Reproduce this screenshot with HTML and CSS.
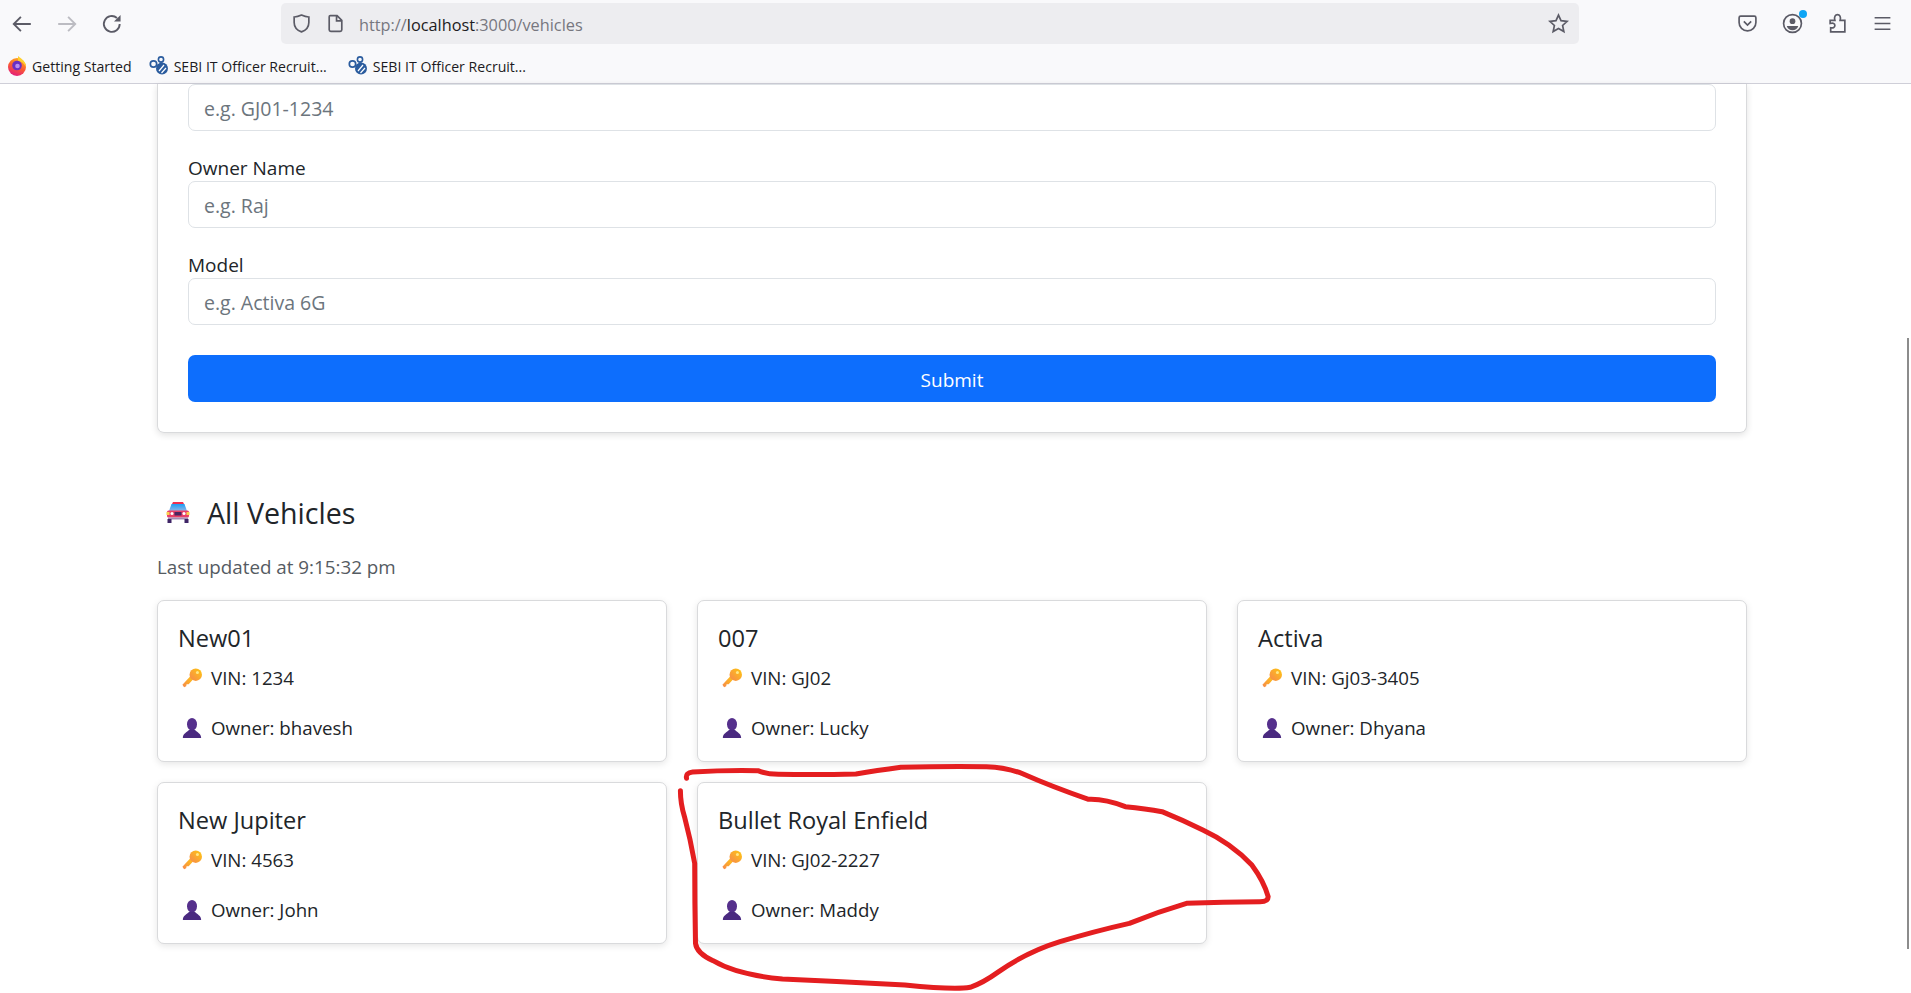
FILE: index.html
```html
<!DOCTYPE html>
<html lang="en">
<head>
    <meta charset="UTF-8">
    <meta name="viewport" content="width=device-width, initial-scale=1.0">
    <link rel="stylesheet" href="styles.css">
    <title>Vehicles</title>
</head>
<body>
    <svg class="defs" width="0" height="0">
        <defs>
            <linearGradient id="keyfill" x1="1" y1="0" x2="0" y2="1">
                <stop offset="0" stop-color="#ffc80f"/>
                <stop offset="1" stop-color="#f6874f"/>
            </linearGradient>
            <linearGradient id="glass" x1="0" y1="0" x2="0" y2="1">
                <stop offset="0" stop-color="#1f9df2"/>
                <stop offset="1" stop-color="#8fb6e8"/>
            </linearGradient>
            <linearGradient id="fox" x1="0.7" y1="0" x2="0.3" y2="1">
                <stop offset="0" stop-color="#ffb01f"/>
                <stop offset="0.5" stop-color="#fb5b32"/>
                <stop offset="1" stop-color="#e2197f"/>
            </linearGradient>
            <symbol id="key" viewBox="0 0 24 24">
                <path d="M10 10 L0.500 20 L2.500 23 L5 22 L5.500 19.500 L8 19.500 L14 13 Z" fill="url(#keyfill)"/>
                <circle cx="16.500" cy="8" r="7.500" fill="url(#keyfill)"/>
                <circle cx="18.500" cy="5.500" r="1.800" fill="#ffe889"/>
            </symbol>
            <symbol id="person" viewBox="0 0 24 24">
                <ellipse cx="12" cy="7.500" rx="6" ry="7.500" fill="#55308c"/>
                <path d="M1 24 C1 18 6 17.500 8.500 14 H15.500 C18 17.500 23 18 23 24 Z" fill="#4a2a80"/>
            </symbol>
            <symbol id="car" viewBox="0 0 24 21">
                <path d="M7 0 H17 L18 2 H6 Z" fill="#f0304f"/>
                <path d="M5.500 2 H18.500 L21 9 H3 Z" fill="url(#glass)"/>
                <rect x="1" y="8.500" width="22" height="7" rx="1.500" fill="#ea3f68"/>
                <rect x="0.500" y="10" width="3" height="3" fill="#f9d04e"/>
                <rect x="20.500" y="10" width="3" height="3" fill="#f9d04e"/>
                <circle cx="6" cy="11.500" r="1.500" fill="#fff"/>
                <circle cx="18" cy="11.500" r="1.500" fill="#fff"/>
                <rect x="8.500" y="10" width="7" height="3.500" fill="#4a2560"/>
                <rect x="2" y="15.500" width="20" height="2" fill="#a58bb4"/>
                <rect x="1.500" y="17" width="4" height="4" fill="#3e2466"/>
                <rect x="18.500" y="17" width="4" height="4" fill="#3e2466"/>
            </symbol>
            <symbol id="sebi" viewBox="0 0 20 20">
                <circle cx="4.500" cy="8" r="3.200" fill="none" stroke="#2b5c9e" stroke-width="1.700"/>
                <circle cx="12" cy="3.500" r="2.600" fill="none" stroke="#2b5c9e" stroke-width="1.600"/>
                <circle cx="13" cy="12.500" r="6" fill="#2b5c9e"/>
                <path d="M10 15 L15 9 M12.500 17 L17 12" stroke="#fff" stroke-width="1.200"/>
            </symbol>
        </defs>
    </svg>

    <header class="browser">
        <div class="nav-row">
            <div class="nav-btns">
                <svg class="ico" viewBox="0 0 20 20"><path d="M18 10 H2.500 M9 3.500 L2.500 10 L9 16.500"/></svg>
                <svg class="ico ico-off" viewBox="0 0 20 20"><path d="M2 10 H17.500 M11 3.500 L17.500 10 L11 16.500"/></svg>
                <svg class="ico" viewBox="0 0 20 20"><path d="M17 10 A7.200 7.200 0 1 1 14.500 4.500"/><path class="solid" d="M17.800 1.800 V7.800 H11.800 Z"/></svg>
            </div>
            <div class="urlbar">
                <svg class="ico-sm" viewBox="0 0 20 20"><path d="M10 2 C7 3.500 5 3.800 3 3.800 V9 C3 13.500 6 16.500 10 18 C14 16.500 17 13.500 17 9 V3.800 C15 3.800 13 3.500 10 2 Z"/></svg>
                <svg class="ico-sm" viewBox="0 0 20 20"><path d="M5 2.500 H11.500 L16 7 V16 A1.500 1.500 0 0 1 14.500 17.500 H5.500 A1.500 1.500 0 0 1 4 16 V3.500 A1 1 0 0 1 5 2.500 Z M11 2.500 V7.500 H16"/></svg>
                <span class="url">http://<b>localhost</b>:3000/vehicles</span>
                <svg class="ico-sm star" viewBox="0 0 20 20"><path d="M10 2 L12.400 7.300 L18.200 8 L13.900 11.900 L15.100 17.700 L10 14.800 L4.900 17.700 L6.100 11.900 L1.800 8 L7.600 7.300 Z"/></svg>
            </div>
            <div class="tools">
                <svg class="ico-sm" viewBox="0 0 20 20"><path d="M3.500 3 H16.500 A1.500 1.500 0 0 1 18 4.500 V9 C18 13.500 14.500 17 10 17 C5.500 17 2 13.500 2 9 V4.500 A1.500 1.500 0 0 1 3.500 3 Z M6.500 8 L10 11.500 L13.500 8"/></svg>
                <div class="account">
                    <svg class="ico-sm" viewBox="0 0 20 20"><circle cx="10" cy="10" r="8.500"/><circle class="solid" cx="10" cy="7.800" r="2.700"/><path class="solid" d="M4.500 12.300 H15.500 C14.500 15 12.500 16.500 10 16.500 C7.500 16.500 5.500 15 4.500 12.300 Z"/></svg>
                    <span class="dot"></span>
                </div>
                <svg class="ico-sm" viewBox="0 0 20 20"><path d="M3 7 H7.500 C6.500 3.500 8 1.500 10 1.500 C12 1.500 13.500 3.500 12.500 7 H17 V18 H3.500 V14 C6 14.500 7.500 13.500 7.500 11.800 C7.500 10 6 9.200 3 10 Z"/></svg>
                <svg class="ico-sm" viewBox="0 0 20 20"><path d="M2.500 4.500 H17.500 M2.500 10 H17.500 M2.500 15.500 H17.500"/></svg>
            </div>
        </div>
        <div class="bookmarks">
            <span class="mark">
                <svg class="mark-ico" viewBox="0 0 20 20"><circle cx="10" cy="11" r="9" fill="url(#fox)"/><path d="M11 0 C15 3 19 6 19 11 C17 7 14 5 11 5 Z" fill="#ffd02e"/><circle cx="10" cy="9.500" r="4.800" fill="#6a2ec4"/><circle cx="10.500" cy="10" r="2.300" fill="#b98cf2"/></svg>
                Getting Started
            </span>
            <span class="mark">
                <svg class="mark-ico"><use href="#sebi"/></svg>
                SEBI IT Officer Recruit...
            </span>
            <span class="mark mark-last">
                <svg class="mark-ico"><use href="#sebi"/></svg>
                SEBI IT Officer Recruit...
            </span>
        </div>
    </header>

    <main class="page">
        <section class="form-card">
            <input class="field" type="text" placeholder="e.g. GJ01-1234">
            <label class="field-label" for="owner">Owner Name</label>
            <input class="field" id="owner" type="text" placeholder="e.g. Raj">
            <label class="field-label" for="model">Model</label>
            <input class="field" id="model" type="text" placeholder="e.g. Activa 6G">
            <button class="submit">Submit</button>
        </section>

        <h2 class="title"><svg class="car"><use href="#car"/></svg>All Vehicles</h2>
        <p class="updated">Last updated at 9:15:32 pm</p>

        <div class="grid">
            <article class="card">
                <h5>New01</h5>
                <p><svg class="emoji"><use href="#key"/></svg>VIN: 1234</p>
                <p><svg class="emoji"><use href="#person"/></svg>Owner: bhavesh</p>
            </article>
            <article class="card">
                <h5>007</h5>
                <p><svg class="emoji"><use href="#key"/></svg>VIN: GJ02</p>
                <p><svg class="emoji"><use href="#person"/></svg>Owner: Lucky</p>
            </article>
            <article class="card">
                <h5>Activa</h5>
                <p><svg class="emoji"><use href="#key"/></svg>VIN: Gj03-3405</p>
                <p><svg class="emoji"><use href="#person"/></svg>Owner: Dhyana</p>
            </article>
            <article class="card">
                <h5>New Jupiter</h5>
                <p><svg class="emoji"><use href="#key"/></svg>VIN: 4563</p>
                <p><svg class="emoji"><use href="#person"/></svg>Owner: John</p>
            </article>
            <article class="card">
                <h5>Bullet Royal Enfield</h5>
                <p><svg class="emoji"><use href="#key"/></svg>VIN: GJ02-2227</p>
                <p><svg class="emoji"><use href="#person"/></svg>Owner: Maddy</p>
            </article>
        </div>
    </main>

    <div class="scrollbar"></div>

    <!-- red marker scribble drawn over the screenshot -->
    <svg class="scribble" viewBox="0 0 1568 729" preserveAspectRatio="none">
        <path d="M65 85 Q62 68 80 66 Q160 60 240 62 Q260 72 290 73 Q390 75 480 72 Q530 62 590 52 Q700 48 800 50 Q850 52 890 72 Q960 110 1050 148 Q1090 146 1140 170 Q1190 176 1230 185 Q1280 210 1330 240 Q1400 280 1450 345 Q1480 395 1490 440 Q1490 455 1470 455 Q1380 455 1290 460 Q1220 485 1150 520 Q1060 545 980 575 Q900 605 830 665 Q790 700 760 712 Q720 720 600 705 Q450 695 300 687 Q190 675 130 632 Q90 610 87 580 Q85 460 85 340 Q75 270 60 200 Q50 160 50 122"/>
    </svg>
</body>
</html>
```

FILE: styles.css
```css
* {
 margin: 0;
 padding: 0;
 box-sizing: border-box;
}

body {
 width: 1911px;
 height: 993px;
 overflow: hidden;
 background-color: #fff;
 color: #212529;
 font-family: "Open Sans", "Noto Sans", sans-serif;
 position: relative;
}

.defs {
 position: absolute;
}

/* browser chrome */
.browser {
 height: 84px;
 background-color: #f9f9fb;
 border-bottom: 1px solid #cfcfd8;
 color: #1c1b22;
}

.nav-row {
 height: 47px;
 display: flex;
 align-items: center;
}

.nav-btns {
 width: 281px;
 display: flex;
 gap: 23px;
 padding-left: 11px;
}

.ico {
 width: 22px;
 height: 22px;
 fill: none;
 stroke: #5b5b66;
 stroke-width: 1.7;
}

.ico .solid {
 fill: #5b5b66;
 stroke: none;
}

.ico-off {
 stroke: #bcbcc2;
}

.ico-sm {
 width: 21px;
 height: 21px;
 fill: none;
 stroke: #5b5b66;
 stroke-width: 1.6;
 flex-shrink: 0;
}

.ico-sm .solid {
 fill: #5b5b66;
 stroke: none;
}

.urlbar {
 width: 1298px;
 height: 41px;
 background-color: #ededf0;
 border-radius: 5px;
 display: flex;
 align-items: center;
 gap: 13px;
 padding: 0 10px;
}

.url {
 flex: 1;
 font-size: 16.3px;
 color: #77777f;
 padding-top: 2px;
}

.url b {
 font-weight: 400;
 color: #1c1b22;
}

.tools {
 flex: 1;
 display: flex;
 justify-content: flex-end;
 gap: 24px;
 padding-right: 18px;
}

.account {
 position: relative;
 height: 21px;
}

.dot {
 position: absolute;
 top: -3px;
 right: -4px;
 width: 8px;
 height: 8px;
 border-radius: 50%;
 background-color: #0ea5f5;
}

.bookmarks {
 display: flex;
 align-items: center;
 height: 36px;
 padding: 2px 0 0 7px;
 font-size: 14.1px;
 gap: 17px;
}

.mark {
 display: flex;
 align-items: center;
 gap: 5px;
}

.mark-last {
 margin-left: 4px;
}

.mark-ico {
 width: 20px;
 height: 20px;
}

/* page */
.page {
 padding: 0 164px 0 157px;
}

.form-card {
 height: 349px;
 border: 1px solid #d9dadc;
 border-top: 0;
 border-radius: 0 0 7px 7px;
 box-shadow: 0 2px 7px rgba(0, 0, 0, 0.12);
 padding: 0 30px;
 display: flex;
 flex-direction: column;
}

.field {
 width: 100%;
 height: 47px;
 border: 1px solid #dee2e6;
 border-radius: 7px;
 padding: 2px 15px 0;
 font: inherit;
 font-size: 19.5px;
 flex-shrink: 0;
}

.field::placeholder {
 color: #6c757d;
 opacity: 1;
}

.field-label {
 font-size: 19px;
 line-height: 26px;
 margin-top: 24px;
 height: 26px;
}

.submit {
 height: 47px;
 margin-top: 30px;
 padding-top: 2px;
 background-color: #0d6efd;
 color: #fff;
 border: 0;
 border-radius: 7px;
 font: inherit;
 font-size: 19px;
}

.title {
 display: flex;
 align-items: center;
 gap: 17px;
 margin-top: 59px;
 height: 40px;
 font-size: 28.6px;
 font-weight: 400;
 padding-left: 9px;
}

.car {
 width: 24px;
 height: 21px;
}

.updated {
 margin-top: 21px;
 font-size: 18.8px;
 line-height: 28px;
 color: #555b62;
}

.grid {
 display: grid;
 grid-template-columns: repeat(3, 1fr);
 gap: 20px 30px;
 margin-top: 19px;
}

.card {
 height: 162px;
 background-color: #fff;
 border: 1px solid #d9dadc;
 border-radius: 7px;
 box-shadow: 0 2px 7px rgba(0, 0, 0, 0.1);
 padding: 23px 20px 0;
}

.card h5 {
 font-size: 23.6px;
 font-weight: 400;
 line-height: 28px;
 margin-bottom: 12px;
}

.card p {
 display: flex;
 align-items: center;
 gap: 9px;
 font-size: 18.7px;
 line-height: 28px;
 margin-bottom: 22px;
}

.emoji {
 width: 20px;
 height: 20px;
 margin-left: 4px;
}

.scrollbar {
 position: absolute;
 left: 1907px;
 top: 338px;
 width: 2px;
 height: 611px;
 background-color: #8c8c8c;
}

.scribble {
 position: absolute;
 left: 660px;
 top: 750px;
 width: 640px;
 height: 243px;
 fill: none;
}

.scribble path {
 stroke: #e41e20;
 stroke-width: 5px;
 stroke-linecap: round;
 stroke-linejoin: round;
 vector-effect: non-scaling-stroke;
}
```
